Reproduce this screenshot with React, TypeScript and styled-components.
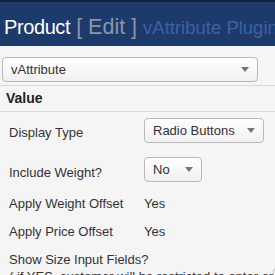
import styled, { createGlobalStyle } from 'styled-components';

const GlobalStyle = createGlobalStyle`
  html, body {
    margin: 0;
    padding: 0;
    background: #f5f5f5;
    font-family: "Liberation Sans", Arial, sans-serif;
    color: #333;
    overflow: hidden;
  }
`;

const Header = styled.div`
  height: 46px;
  border-top: 2px solid #10203f;
  background: #1d3a6c;
  display: flex;
  align-items: baseline;
  padding: 13px 0 0 4px;
  box-sizing: border-box;
  white-space: nowrap;
  overflow: hidden;
`;

const Title = styled.span`
  font-size: 20px;
  color: #fff;
  letter-spacing: -0.4px;
`;

const Edit = styled.span`
  font-size: 21.5px;
  color: #8b95a6;
  margin-left: 6px;
`;

const Plugin = styled.span`
  font-size: 18.5px;
  color: #3c62a0;
  margin-left: 6px;
`;

const SelectBox = styled.div<{ $w: number }>`
  width: ${(p) => p.$w}px;
  height: 25px;
  box-sizing: border-box;
  border: 1px solid #b9b9b9;
  border-radius: 4px;
  background: linear-gradient(#ffffff, #f0f0f0);
  display: flex;
  align-items: center;
  justify-content: space-between;
  padding: 0 8px 0 8px;
  font-size: 13px;
  color: #333;
`;

const Arrow = styled.span`
  width: 0;
  height: 0;
  border-left: 4px solid transparent;
  border-right: 4px solid transparent;
  border-top: 5px solid #777;
`;

const TopSelect = styled.div`
  padding: 11px 0 3px 2px;
`;

const SectionTitle = styled.div`
  border-top: 1px solid #d8d8d8;
  border-bottom: 1px solid #d8d8d8;
  height: 25px;
  padding-left: 6px;
  font-size: 14px;
  font-weight: bold;
  line-height: 25px;
  color: #222;
`;

const Row = styled.div<{ $h: number }>`
  display: flex;
  align-items: flex-start;
  height: ${(p) => p.$h}px;
  padding-left: 9px;
`;

const Label = styled.div<{ $top?: number; $lh?: number }>`
  width: 135px;
  flex-shrink: 0;
  margin-top: ${(p) => p.$top ?? 0}px;
  font-size: 13px;
  line-height: ${(p) => p.$lh ?? 17}px;
`;

const Value = styled.div<{ $top?: number; $lh?: number }>`
  margin-top: ${(p) => p.$top ?? 0}px;
  font-size: 13px;
  line-height: ${(p) => p.$lh ?? 17}px;
`;

const LongLabel = styled.div`
  width: 264px;
  flex-shrink: 0;
  margin-top: 5px;
  font-size: 13px;
  line-height: 17px;
  white-space: nowrap;
`;

const SizeInput = styled.div`
  margin-top: 22px;
  width: 40px;
  height: 24px;
  border: 1px solid #bbb;
  border-radius: 3px;
  background: #fff;
  flex-shrink: 0;
`;

function Select({ text, width }: { text: string; width: number }) {
  return (
    <SelectBox $w={width}>
      <span>{text}</span>
      <Arrow />
    </SelectBox>
  );
}

export default function App() {
  return (
    <>
      <GlobalStyle />
      <Header>
        <Title>Product</Title>
        <Edit>[ Edit ]</Edit>
        <Plugin>vAttribute Plugin</Plugin>
      </Header>
      <TopSelect>
        <Select text="vAttribute" width={256} />
      </TopSelect>
      <SectionTitle>Value</SectionTitle>
      <Row $h={38}>
        <Label $top={12}>Display Type</Label>
        <Value $top={6}>
          <Select text="Radio Buttons" width={120} />
        </Value>
      </Row>
      <Row $h={40}>
        <Label $top={14}>Include Weight?</Label>
        <Value $top={7}>
          <Select text="No" width={58} />
        </Value>
      </Row>
      <Row $h={28}>
        <Label $lh={28}>Apply Weight Offset</Label>
        <Value $lh={28}>Yes</Value>
      </Row>
      <Row $h={28}>
        <Label $lh={28}>Apply Price Offset</Label>
        <Value $lh={28}>Yes</Value>
      </Row>
      <Row $h={60}>
        <LongLabel>
          Show Size Input Fields?
          <br />( if YES, customer will be restricted to enter only sizes )
        </LongLabel>
        <SizeInput />
      </Row>
    </>
  );
}
